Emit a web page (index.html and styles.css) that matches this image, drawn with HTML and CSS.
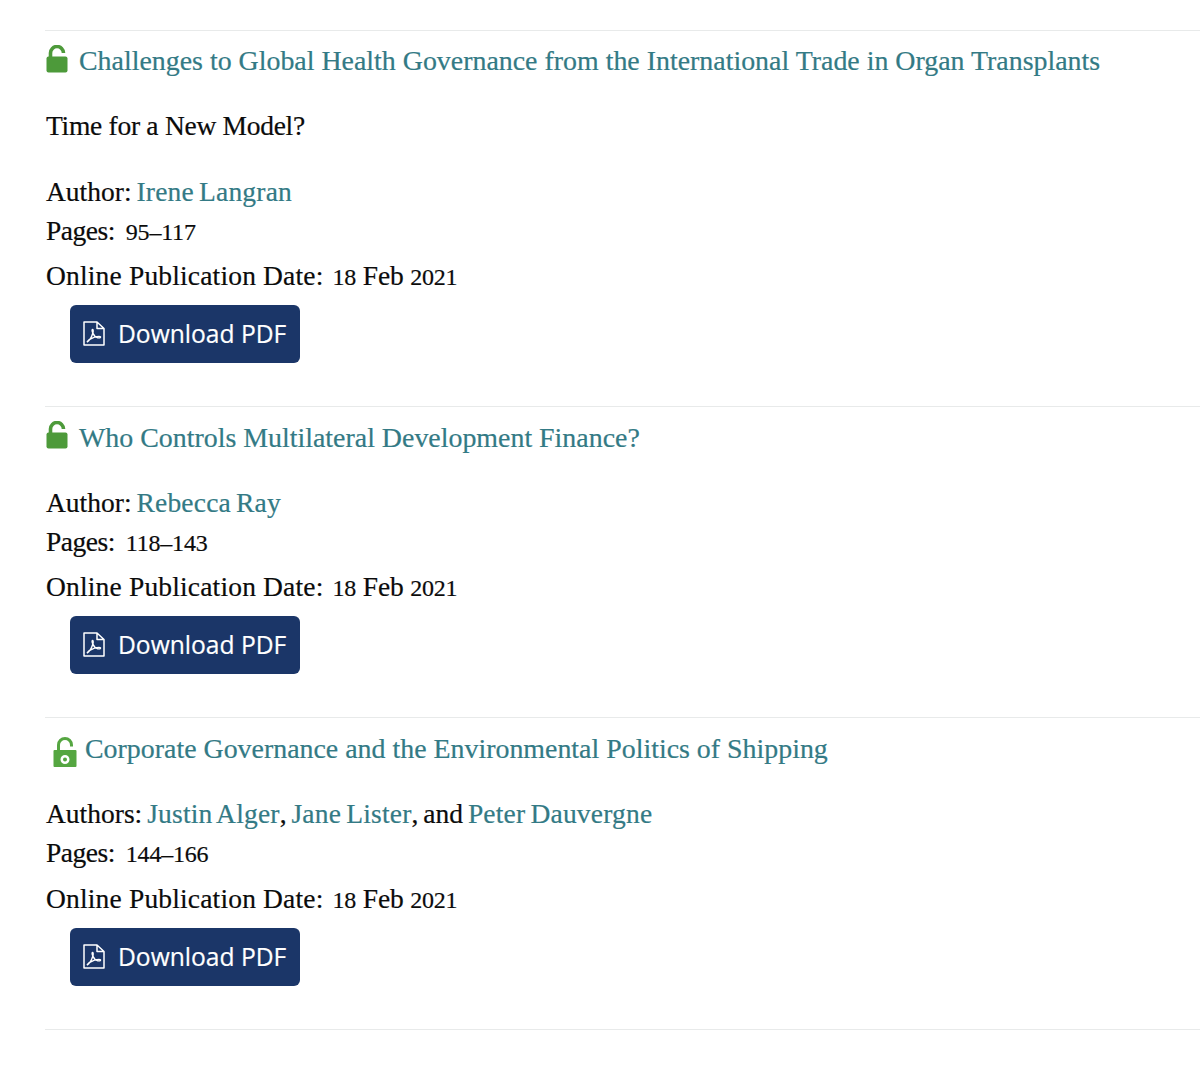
FILE: index.html
```html
<!DOCTYPE html>
<html lang="en">
<head>
<meta charset="utf-8">
<title>Articles</title>
<link rel="stylesheet" href="styles.css">
</head>
<body>
<svg class="defs" width="0" height="0" aria-hidden="true">
  <symbol id="lock" viewBox="0 0 22 28">
    <path d="M4.500 12V8a6.500 6.500 0 0 1 13 0" fill="none" stroke="currentColor" stroke-width="3.600"/>
    <rect x="0.500" y="11.500" width="21" height="16" rx="2" fill="currentColor"/>
  </symbol>
  <symbol id="lock-o" viewBox="0 0 24 30">
    <path d="M5.500 14V8a6.500 6.500 0 0 1 13 0V9.500" fill="none" stroke="currentColor" stroke-width="3"/>
    <path fill-rule="evenodd" d="M1.500 13h21a1 1 0 0 1 1 1v15a1 1 0 0 1-1 1h-21a1 1 0 0 1-1-1V14a1 1 0 0 1 1-1zM12 18a4.500 4.500 0 1 0 0 9a4.500 4.500 0 0 0 0-9zM12 20.500a2 2 0 1 1 0 4a2 2 0 0 1 0-4z" fill="currentColor"/>
  </symbol>
  <symbol id="pdf" viewBox="0 0 22 25">
    <path d="M1 1h13l7 6.500V24H1z M14 1v6.500h7" fill="none" stroke="currentColor" stroke-width="1.500" stroke-linejoin="round"/>
    <path d="M4 21c3-1.500 5-6 6-9.500.4-2 .1-3-.4-3-.7 0-.6 2 .2 3.500 1 2.300 2.700 4.200 5 4.700 1.800.4 3-.1 2.700-.8-.4-.8-3.300-.5-6 .3-2.800.9-5.900 2.800-7.500 4.800z" fill="none" stroke="currentColor" stroke-width="1.400"/>
  </symbol>
</svg>
<main class="list">
  <article class="item item-first">
    <h2 class="title"><svg class="lock"><use href="#lock"/></svg><a href="#">Challenges to Global Health Governance from the International Trade in Organ Transplants</a></h2>
    <p class="subtitle">Time for a New Model?</p>
    <p class="author">Author: <a href="#">Irene Langran</a></p>
    <p class="pages"><span class="label">Pages:</span><span class="val num">95–117</span></p>
    <p class="date"><span class="label">Online Publication Date:</span><span class="val"><span class="num">18</span> Feb <span class="num">2021</span></span></p>
    <a class="btn" href="#"><svg class="pdf"><use href="#pdf"/></svg>Download PDF</a>
  </article>
  <article class="item">
    <h2 class="title"><svg class="lock"><use href="#lock"/></svg><a href="#">Who Controls Multilateral Development Finance?</a></h2>
    <p class="author">Author: <a href="#">Rebecca Ray</a></p>
    <p class="pages"><span class="label">Pages:</span><span class="val num">118–143</span></p>
    <p class="date"><span class="label">Online Publication Date:</span><span class="val"><span class="num">18</span> Feb <span class="num">2021</span></span></p>
    <a class="btn" href="#"><svg class="pdf"><use href="#pdf"/></svg>Download PDF</a>
  </article>
  <article class="item item-last">
    <h2 class="title title-alt"><svg class="lock-o"><use href="#lock-o"/></svg><a href="#">Corporate Governance and the Environmental Politics of Shipping</a></h2>
    <p class="author">Authors: <a href="#">Justin Alger</a>, <a href="#">Jane Lister</a>, and <a href="#">Peter Dauvergne</a></p>
    <p class="pages"><span class="label">Pages:</span><span class="val num">144–166</span></p>
    <p class="date"><span class="label">Online Publication Date:</span><span class="val"><span class="num">18</span> Feb <span class="num">2021</span></span></p>
    <a class="btn" href="#"><svg class="pdf"><use href="#pdf"/></svg>Download PDF</a>
  </article>
</main>
</body>
</html>
```
FILE: styles.css
```css
html, body { margin: 0; padding: 0; background: #fff; }
body { font-family: "Liberation Serif", serif; color: #0b0b0b; height: 1079px; overflow: hidden; }
.defs { position: absolute; }
.list { margin: 30px 0 0 45px; border-top: 1px solid #e8eaea; }
.item { height: 310px; border-bottom: 1px solid #e8eaea; }
.item-first { height: 375px; }
.item-last { height: 311px; }
a { color: #337a85; text-decoration: none; }
p { margin: 0 0 0 1px; font-size: 27.500px; white-space: nowrap; -webkit-text-stroke: 0.200px currentColor; }
.num { font-size: 24px; }
.val { margin-left: 11px; letter-spacing: -0.200px; }
.date .val { margin-left: 9px; }
.title { margin: 0; padding-top: 11px; height: 40px; display: flex; align-items: center; font-size: 27.900px; font-weight: 400; white-space: nowrap; -webkit-text-stroke: 0.200px currentColor; }
.item-first .title { padding-top: 10px; }
.lock { width: 22px; height: 28px; margin: -6px 11px 0 1px; color: #4d9a3a; flex: none; }
.item-first .lock { margin-top: -4px; }
.title-alt { padding-left: 8px; }
.lock-o { width: 24px; height: 30px; margin: 6px 8px 0 0; color: #55a641; flex: none; }
.subtitle { margin-top: 25px; height: 66px; line-height: 40px; letter-spacing: -0.280px; }
.author { margin-top: 25px; height: 41px; line-height: 40px; word-spacing: -2px; }
.author a { letter-spacing: 0.200px; }
.subtitle + .author { margin-top: 0; }
.pages { height: 39px; line-height: 36px; }
.item-last .pages { height: 40px; }
.pages .label { letter-spacing: -0.500px; }
.date { height: 45px; line-height: 48px; }
.date .label { letter-spacing: 0.170px; }
.btn { display: flex; align-items: center; width: 230px; height: 58px; margin: 8px 0 0 25px; box-sizing: border-box; padding: 0 0 1px 13px; background: #1b3668; border-radius: 6px; color: #fff; font-family: "Open Sans", sans-serif; font-size: 24.600px; -webkit-text-stroke: 0.200px currentColor; }
.pdf { width: 22px; height: 25px; margin-right: 13px; flex: none; }
```
